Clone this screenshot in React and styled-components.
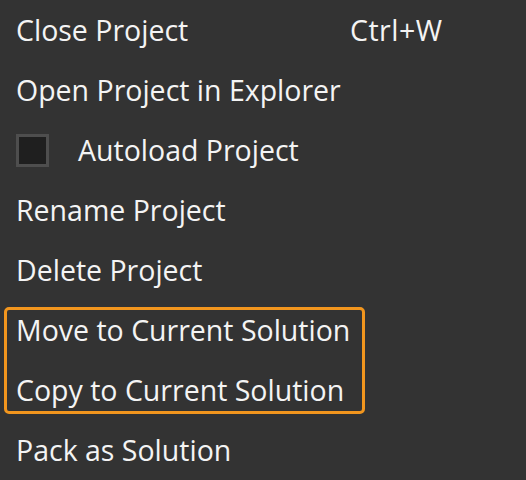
import React from "react";
import styled, { createGlobalStyle } from "styled-components";

const Global = createGlobalStyle`
  html, body { margin: 0; padding: 0; background: #333333; }
  body { font-family: "Open Sans", "Noto Sans", sans-serif; }
`;

const Menu = styled.div`
  width: 526px;
  height: 480px;
  background: #333333;
  display: flex;
  flex-direction: column;
  overflow: hidden;
`;

const Item = styled.div`
  height: 60px;
  display: flex;
  align-items: center;
  padding-left: 16px;
  color: #f4f4f4;
  font-size: 28.5px;
  white-space: nowrap;
  box-sizing: border-box;
`;

const Label = styled.span`
  width: ${(p) => (p.$wide ? "334px" : "auto")};
`;

const Shortcut = styled.span`
  color: #f4f4f4;
  letter-spacing: 0.5px;
`;

const Check = styled.span`
  width: 33px;
  height: 33px;
  box-sizing: border-box;
  border: 3px solid #4e4e4e;
  background: #1f1f1f;
  margin-right: 29px;
  flex: none;
`;

const Group = styled.div`
  position: relative;
  display: flex;
  flex-direction: column;
  &::after {
    content: "";
    position: absolute;
    left: 4px;
    top: 7px;
    width: 361px;
    height: 107px;
    box-sizing: border-box;
    border: 3px solid #f2961e;
    border-radius: 5px;
    pointer-events: none;
  }
`;

export default function App() {
  return (
    <>
      <Global />
      <Menu>
        <Item>
          <Label $wide>Close Project</Label>
          <Shortcut>Ctrl+W</Shortcut>
        </Item>
        <Item>
          <Label>Open Project in Explorer</Label>
        </Item>
        <Item>
          <Check />
          <Label>Autoload Project</Label>
        </Item>
        <Item>
          <Label>Rename Project</Label>
        </Item>
        <Item>
          <Label>Delete Project</Label>
        </Item>
        <Group>
          <Item>
            <Label>Move to Current Solution</Label>
          </Item>
          <Item>
            <Label>Copy to Current Solution</Label>
          </Item>
        </Group>
        <Item>
          <Label>Pack as Solution</Label>
        </Item>
      </Menu>
    </>
  );
}
